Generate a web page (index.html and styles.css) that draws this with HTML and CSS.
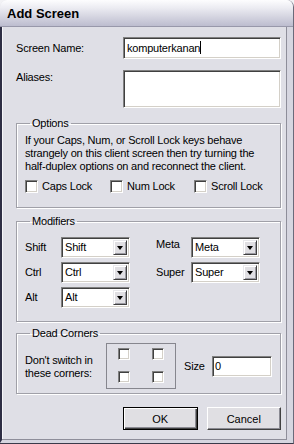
FILE: index.html
```html
<!DOCTYPE html>
<html>
<head>
    <link rel="stylesheet" href="styles.css">
</head>
<body>
    <div class="window">
        <div class="titlebar"><span class="title">Add Screen</span></div>
        <div class="client">
            <div class="row name-row">
                <span class="lbl">Screen Name:</span>
                <div class="field name-field">komputerkanan<span class="caret"></span></div>
            </div>
            <div class="row alias-row">
                <span class="lbl">Aliases:</span>
                <div class="field alias-field"></div>
            </div>

            <fieldset class="group options">
                <legend>Options</legend>
                <p class="note">If your Caps, Num, or Scroll Lock keys behave<br>strangely on this client screen then try turning the<br>half-duplex options on and reconnect the client.</p>
                <div class="checks">
                    <span class="check caps"><span class="box"></span>Caps Lock</span>
                    <span class="check num"><span class="box"></span>Num Lock</span>
                    <span class="check scroll"><span class="box"></span>Scroll Lock</span>
                </div>
            </fieldset>

            <fieldset class="group modifiers">
                <legend>Modifiers</legend>
                <div class="mod-grid">
                    <span class="mod-lbl">Shift</span>
                    <div class="combo"><span class="combo-text">Shift</span><span class="drop"><span class="arrow"></span></span></div>
                    <span class="mod-lbl right-lbl raised">Meta</span>
                    <div class="combo"><span class="combo-text">Meta</span><span class="drop"><span class="arrow"></span></span></div>

                    <span class="mod-lbl">Ctrl</span>
                    <div class="combo"><span class="combo-text">Ctrl</span><span class="drop"><span class="arrow"></span></span></div>
                    <span class="mod-lbl right-lbl">Super</span>
                    <div class="combo"><span class="combo-text">Super</span><span class="drop"><span class="arrow"></span></span></div>

                    <span class="mod-lbl">Alt</span>
                    <div class="combo"><span class="combo-text">Alt</span><span class="drop"><span class="arrow"></span></span></div>
                </div>
            </fieldset>

            <fieldset class="group corners">
                <legend>Dead Corners</legend>
                <div class="corner-row">
                    <span class="corner-lbl">Don't switch in<br>these corners:</span>
                    <div class="corner-box">
                        <span class="box small"></span>
                        <span class="box small"></span>
                        <span class="box small"></span>
                        <span class="box small"></span>
                    </div>
                    <span class="size-lbl">Size</span>
                    <div class="field size-field">0</div>
                </div>
            </fieldset>

            <div class="buttons">
                <button class="btn default">OK</button>
                <button class="btn">Cancel</button>
            </div>
        </div>
    </div>
</body>
</html>
```

FILE: styles.css
```css
html, body{
    margin: 0;
    background: #f2f2f5;
}
body{
    font-family: "Liberation Sans", Arial, sans-serif;
    font-size: 11px;
    line-height: 13px;
    letter-spacing: -0.2px;
    color: #000;
}
.window{
    width: 294px;
    height: 444px;
    box-sizing: border-box;
    display: flex;
    flex-direction: column;
    background: #dfdfe6;
    border-radius: 7px 7px 0 0;
    border-right: 1px solid #6a6a7a;
    border-bottom: 1px solid #3a3a4a;
    overflow: hidden;
}
.titlebar{
    height: 26px;
    flex: none;
    display: flex;
    align-items: center;
    padding-left: 7px;
    background: linear-gradient(#fdfdfe, #ececf2 30%, #d4d4e0 65%, #bdbdcf);
    border-bottom: 1px solid #9898aa;
}
.title{
    font-weight: bold;
    font-size: 13px;
    letter-spacing: 0;
    padding-top: 1px;
}
.client{
    flex: 1;
    display: flex;
    flex-direction: column;
    border-left: 2px solid #2e2e44;
    border-right: 6px solid #d6d6e0;
    border-bottom: 3px solid #d6d6e0;
    box-shadow: inset -1px -1px #8e8e9a, inset 1px 0 #f6f6f9;
    padding: 10px 6px 0 14px;
}

/* text rows */
.row{
    display: flex;
}
.lbl{
    width: 107px;
    flex: none;
}
.name-row{
    align-items: center;
    height: 22px;
}
.alias-row{
    margin-top: 11px;
}
.alias-row .lbl{
    margin-top: 1px;
}
.field{
    box-sizing: border-box;
    background: #fff;
    border-top: 1px solid #808080;
    border-left: 1px solid #808080;
    border-right: 1px solid #fff;
    border-bottom: 1px solid #fff;
    box-shadow: inset 1px 1px #404040, inset -1px -1px #d4d0c8;
    padding-left: 3px;
}
.name-field{
    width: 158px;
    height: 22px;
    line-height: 20px;
}
.caret{
    display: inline-block;
    width: 1px;
    height: 13px;
    background: #000;
    vertical-align: -2px;
}
.alias-field{
    width: 158px;
    height: 38px;
}

/* group boxes */
.group{
    margin: 9px 0 0 0;
    padding: 0 0 0 8px;
    border: 1px solid #a0a0a8;
    box-shadow: inset 1px 1px #fff, 1px 1px #fff;
    min-width: 0;
}
.group legend{
    padding: 0 2px;
    margin-left: 5px;
    line-height: 13px;
}
.options{
    padding-top: 4px;
    padding-bottom: 14px;
}
.note{
    margin: 0;
}
.checks{
    display: flex;
    margin-top: 7px;
    height: 13px;
}
.check{
    display: flex;
    align-items: center;
}
.caps{ width: 85px; }
.num{ width: 84px; }
.box{
    box-sizing: border-box;
    width: 13px;
    height: 13px;
    flex: none;
    margin-right: 4px;
    background: #fff;
    border-top: 1px solid #808080;
    border-left: 1px solid #808080;
    border-right: 1px solid #fff;
    border-bottom: 1px solid #fff;
    box-shadow: inset 1px 1px #404040, inset -1px -1px #d4d0c8;
}
.box.small{
    width: 12px;
    height: 12px;
    margin: 0;
}

.modifiers{
    margin-top: 7px;
    padding-top: 9px;
    padding-bottom: 13px;
}
.mod-grid{
    display: grid;
    grid-template-columns: 36px 69px 61px 69px;
    grid-auto-rows: 21px;
    row-gap: 4px;
    align-items: center;
}
.right-lbl{
    padding-left: 26px;
}
.raised{
    margin-bottom: 6px;
}
.combo{
    box-sizing: border-box;
    height: 21px;
    display: flex;
    background: #fff;
    border-top: 1px solid #808080;
    border-left: 1px solid #808080;
    border-right: 1px solid #fff;
    border-bottom: 1px solid #fff;
    box-shadow: inset 1px 1px #404040, inset -1px -1px #d4d0c8;
    padding: 2px;
}
.combo-text{
    flex: 1;
    padding-left: 1px;
    line-height: 15px;
}
.drop{
    width: 14px;
    flex: none;
    display: flex;
    align-items: center;
    justify-content: center;
    box-sizing: border-box;
    background: #e0dfe3;
    border-top: 1px solid #e8e8ec;
    border-left: 1px solid #e8e8ec;
    border-right: 1px solid #404040;
    border-bottom: 1px solid #404040;
    box-shadow: inset 1px 1px #fff, inset -1px -1px #9a9aa2;
}
.arrow{
    width: 0;
    height: 0;
    border-left: 3.5px solid transparent;
    border-right: 3.5px solid transparent;
    border-top: 4px solid #000;
    margin-top: 1px;
}

.corners{
    margin-top: 5px;
    padding-top: 3px;
    padding-bottom: 4px;
}
.corner-row{
    display: flex;
    align-items: center;
}
.corner-lbl{
    width: 81px;
    flex: none;
    margin-top: 1px;
}
.corner-box{
    box-sizing: border-box;
    width: 70px;
    height: 46px;
    border: 1px solid #86868e;
    display: grid;
    grid-template-columns: 12px 12px;
    grid-template-rows: 12px 12px;
    column-gap: 22px;
    row-gap: 11px;
    padding: 4px 0 0 11px;
}
.size-lbl{
    width: 28px;
    margin-left: 8px;
    margin-top: 1px;
}
.size-field{
    width: 60px;
    height: 21px;
    line-height: 19px;
    padding-left: 2px;
    margin-top: 1px;
}

/* buttons */
.buttons{
    display: flex;
    gap: 9px;
    margin-top: 13px;
    padding-left: 107px;
}
.btn{
    box-sizing: border-box;
    width: 75px;
    height: 23px;
    padding: 0;
    font-family: inherit;
    font-size: 11px;
    letter-spacing: 0;
    color: #000;
    background: #e0dfe3;
    border-top: 1px solid #fff;
    border-left: 1px solid #fff;
    border-right: 1px solid #404040;
    border-bottom: 1px solid #404040;
    box-shadow: inset -1px -1px #8a8a92;
}
.btn.default{
    border: 1px solid #000;
    box-shadow: inset 1px 1px #fff, inset -1px -1px #404040, inset -2px -2px #8a8a92;
}
```
